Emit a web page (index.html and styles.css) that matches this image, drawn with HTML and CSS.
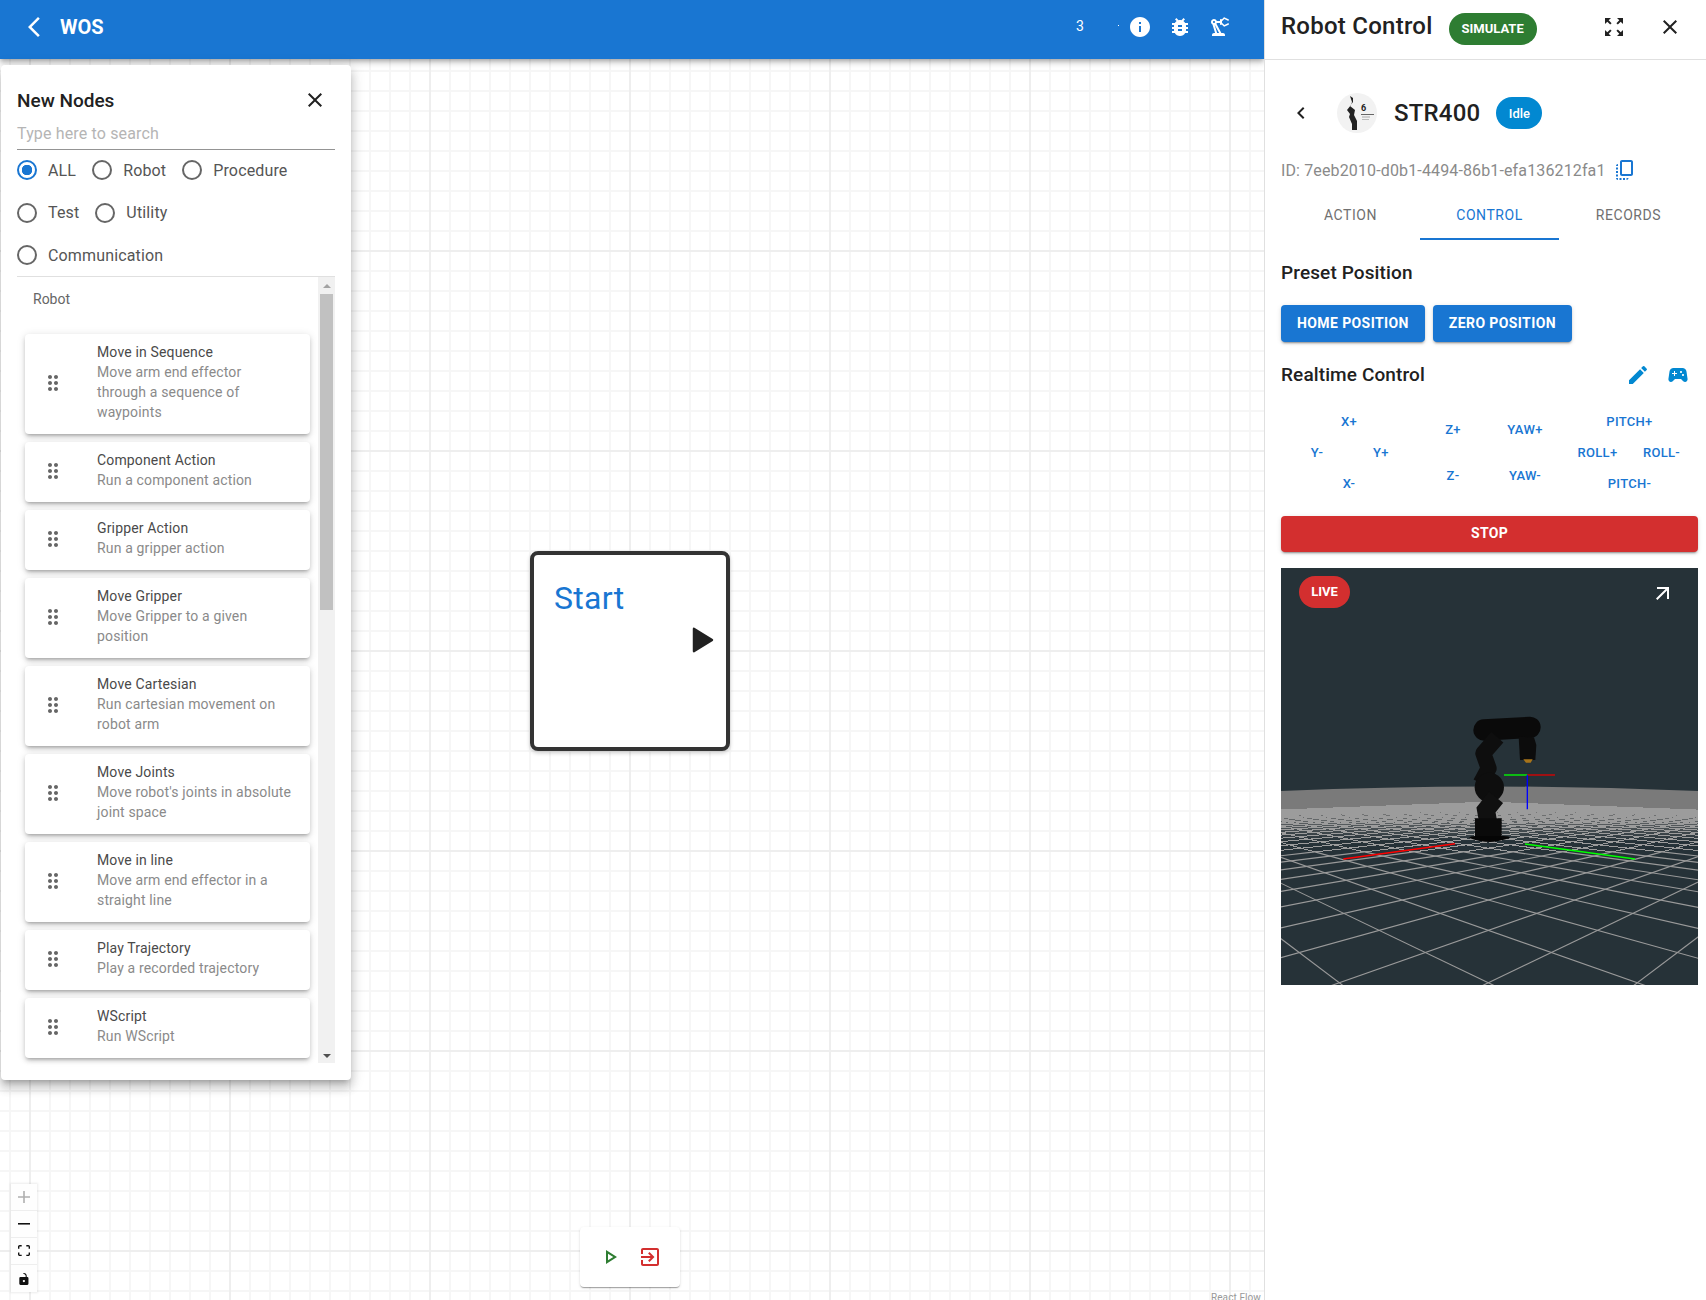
FILE: index.html
```html
<!DOCTYPE html>
<html lang="en">
<head>
<meta charset="utf-8">
<title>WOS</title>
<link rel="stylesheet" href="styles.css">
</head>
<body>
<div class="app">
  <main class="main">
    <header class="topbar">
      <svg class="ico-back" viewBox="0 0 24 24"><path d="M17.77 3.77 16 2 6 12l10 10 1.77-1.77L9.54 12z"/></svg>
      <span class="brand">WOS</span>
      <div class="top-actions">
        <span class="top-count">3</span>
        <span class="top-dot"></span>
        <svg class="ico24" viewBox="0 0 24 24"><path d="M12 2C6.48 2 2 6.48 2 12s4.48 10 10 10 10-4.48 10-10S17.52 2 12 2zm1 15h-2v-6h2v6zm0-8h-2V7h2v2z"/></svg>
        <svg class="ico24" viewBox="0 0 24 24"><path d="M20 8h-2.81c-.45-.78-1.07-1.45-1.82-1.96L17 4.41 15.59 3l-2.17 2.17C12.96 5.06 12.49 5 12 5c-.49 0-.96.06-1.41.17L8.41 3 7 4.41l1.62 1.63C7.88 6.55 7.26 7.22 6.81 8H4v2h2.09c-.05.33-.09.66-.09 1v1H4v2h2v1c0 .34.04.67.09 1H4v2h2.81c1.04 1.79 2.97 3 5.19 3s4.15-1.21 5.19-3H20v-2h-2.09c.05-.33.09-.66.09-1v-1h2v-2h-2v-1c0-.34-.04-.67-.09-1H20V8zm-6 8h-4v-2h4v2zm0-4h-4v-2h4v2z"/></svg>
        <svg class="ico24" viewBox="0 0 24 24"><path d="M19.93 8.35l-3.6 1.68L14 7.7V6.3l2.33-2.33 3.6 1.68c.38.18.82.01 1-.36.18-.38.01-.82-.36-1l-3.92-1.83c-.38-.18-.83-.1-1.13.2L13.78 4.4c-.18-.24-.46-.4-.78-.4-.55 0-1 .45-1 1v1H8.82C8.4 4.84 7.3 4 6 4 4.34 4 3 5.34 3 7c0 1.1.6 2.05 1.48 2.58L7.08 18H6c-1.1 0-2 .9-2 2v1h13v-1c0-1.1-.9-2-2-2h-1.62L8.41 8.77c.17-.24.31-.49.41-.77H12v1c0 .55.45 1 1 1 .32 0 .6-.16.78-.4l1.74 1.74c.3.3.75.38 1.13.2l3.92-1.83c.38-.18.54-.62.36-1-.18-.37-.62-.54-1-.36zM6 8c-.55 0-1-.45-1-1s.45-1 1-1 1 .45 1 1-.45 1-1 1zm5.11 10H9.17l-2.46-8h.1l4.3 8z"/></svg>
      </div>
    </header>
    <div class="canvas"></div>

    <section class="node-start">
      <span class="node-title">Start</span>
      <svg class="node-handle" viewBox="0 0 22 26"><path d="M2.5 2.5 19.5 13 2.5 23.5z"/></svg>
    </section>

    <aside class="palette">
      <div class="pal-head">
        <h2 class="pal-title">New Nodes</h2>
        <svg class="pal-close" viewBox="0 0 24 24"><path d="M19 6.41 17.59 5 12 10.59 6.41 5 5 6.41 10.59 12 5 17.59 6.41 19 12 13.41 17.59 19 19 17.59 13.41 12z"/></svg>
      </div>
      <div class="pal-search">Type here to search</div>
      <div class="radio-row">
        <span class="radio"><i class="ring ring-on"></i>ALL</span>
        <span class="radio"><i class="ring"></i>Robot</span>
        <span class="radio"><i class="ring"></i>Procedure</span>
      </div>
      <div class="radio-row">
        <span class="radio"><i class="ring"></i>Test</span>
        <span class="radio"><i class="ring"></i>Utility</span>
      </div>
      <div class="radio-row">
        <span class="radio"><i class="ring"></i>Communication</span>
      </div>
      <div class="pal-body">
        <div class="pal-list">
          <div class="pal-group">Robot</div>
          <div class="card">
            <svg class="grip" viewBox="0 0 24 24"><path d="M11 18c0 1.1-.9 2-2 2s-2-.9-2-2 .9-2 2-2 2 .9 2 2zm-2-8c-1.1 0-2 .9-2 2s.9 2 2 2 2-.9 2-2-.9-2-2-2zm0-6c-1.1 0-2 .9-2 2s.9 2 2 2 2-.9 2-2-.9-2-2-2zm6 4c1.1 0 2-.9 2-2s-.9-2-2-2-2 .9-2 2 .9 2 2 2zm0 2c-1.1 0-2 .9-2 2s.9 2 2 2 2-.9 2-2-.9-2-2-2zm0 6c-1.1 0-2 .9-2 2s.9 2 2 2 2-.9 2-2-.9-2-2-2z"/></svg>
            <div class="card-text"><div class="card-name">Move in Sequence</div><div class="card-desc">Move arm end effector through a sequence of waypoints</div></div>
          </div>
          <div class="card">
            <svg class="grip" viewBox="0 0 24 24"><path d="M11 18c0 1.1-.9 2-2 2s-2-.9-2-2 .9-2 2-2 2 .9 2 2zm-2-8c-1.1 0-2 .9-2 2s.9 2 2 2 2-.9 2-2-.9-2-2-2zm0-6c-1.1 0-2 .9-2 2s.9 2 2 2 2-.9 2-2-.9-2-2-2zm6 4c1.1 0 2-.9 2-2s-.9-2-2-2-2 .9-2 2 .9 2 2 2zm0 2c-1.1 0-2 .9-2 2s.9 2 2 2 2-.9 2-2-.9-2-2-2zm0 6c-1.1 0-2 .9-2 2s.9 2 2 2 2-.9 2-2-.9-2-2-2z"/></svg>
            <div class="card-text"><div class="card-name">Component Action</div><div class="card-desc">Run a component action</div></div>
          </div>
          <div class="card">
            <svg class="grip" viewBox="0 0 24 24"><path d="M11 18c0 1.1-.9 2-2 2s-2-.9-2-2 .9-2 2-2 2 .9 2 2zm-2-8c-1.1 0-2 .9-2 2s.9 2 2 2 2-.9 2-2-.9-2-2-2zm0-6c-1.1 0-2 .9-2 2s.9 2 2 2 2-.9 2-2-.9-2-2-2zm6 4c1.1 0 2-.9 2-2s-.9-2-2-2-2 .9-2 2 .9 2 2 2zm0 2c-1.1 0-2 .9-2 2s.9 2 2 2 2-.9 2-2-.9-2-2-2zm0 6c-1.1 0-2 .9-2 2s.9 2 2 2 2-.9 2-2-.9-2-2-2z"/></svg>
            <div class="card-text"><div class="card-name">Gripper Action</div><div class="card-desc">Run a gripper action</div></div>
          </div>
          <div class="card">
            <svg class="grip" viewBox="0 0 24 24"><path d="M11 18c0 1.1-.9 2-2 2s-2-.9-2-2 .9-2 2-2 2 .9 2 2zm-2-8c-1.1 0-2 .9-2 2s.9 2 2 2 2-.9 2-2-.9-2-2-2zm0-6c-1.1 0-2 .9-2 2s.9 2 2 2 2-.9 2-2-.9-2-2-2zm6 4c1.1 0 2-.9 2-2s-.9-2-2-2-2 .9-2 2 .9 2 2 2zm0 2c-1.1 0-2 .9-2 2s.9 2 2 2 2-.9 2-2-.9-2-2-2zm0 6c-1.1 0-2 .9-2 2s.9 2 2 2 2-.9 2-2-.9-2-2-2z"/></svg>
            <div class="card-text"><div class="card-name">Move Gripper</div><div class="card-desc">Move Gripper to a given position</div></div>
          </div>
          <div class="card">
            <svg class="grip" viewBox="0 0 24 24"><path d="M11 18c0 1.1-.9 2-2 2s-2-.9-2-2 .9-2 2-2 2 .9 2 2zm-2-8c-1.1 0-2 .9-2 2s.9 2 2 2 2-.9 2-2-.9-2-2-2zm0-6c-1.1 0-2 .9-2 2s.9 2 2 2 2-.9 2-2-.9-2-2-2zm6 4c1.1 0 2-.9 2-2s-.9-2-2-2-2 .9-2 2 .9 2 2 2zm0 2c-1.1 0-2 .9-2 2s.9 2 2 2 2-.9 2-2-.9-2-2-2zm0 6c-1.1 0-2 .9-2 2s.9 2 2 2 2-.9 2-2-.9-2-2-2z"/></svg>
            <div class="card-text"><div class="card-name">Move Cartesian</div><div class="card-desc">Run cartesian movement on robot arm</div></div>
          </div>
          <div class="card">
            <svg class="grip" viewBox="0 0 24 24"><path d="M11 18c0 1.1-.9 2-2 2s-2-.9-2-2 .9-2 2-2 2 .9 2 2zm-2-8c-1.1 0-2 .9-2 2s.9 2 2 2 2-.9 2-2-.9-2-2-2zm0-6c-1.1 0-2 .9-2 2s.9 2 2 2 2-.9 2-2-.9-2-2-2zm6 4c1.1 0 2-.9 2-2s-.9-2-2-2-2 .9-2 2 .9 2 2 2zm0 2c-1.1 0-2 .9-2 2s.9 2 2 2 2-.9 2-2-.9-2-2-2zm0 6c-1.1 0-2 .9-2 2s.9 2 2 2 2-.9 2-2-.9-2-2-2z"/></svg>
            <div class="card-text"><div class="card-name">Move Joints</div><div class="card-desc">Move robot's joints in absolute joint space</div></div>
          </div>
          <div class="card">
            <svg class="grip" viewBox="0 0 24 24"><path d="M11 18c0 1.1-.9 2-2 2s-2-.9-2-2 .9-2 2-2 2 .9 2 2zm-2-8c-1.1 0-2 .9-2 2s.9 2 2 2 2-.9 2-2-.9-2-2-2zm0-6c-1.1 0-2 .9-2 2s.9 2 2 2 2-.9 2-2-.9-2-2-2zm6 4c1.1 0 2-.9 2-2s-.9-2-2-2-2 .9-2 2 .9 2 2 2zm0 2c-1.1 0-2 .9-2 2s.9 2 2 2 2-.9 2-2-.9-2-2-2zm0 6c-1.1 0-2 .9-2 2s.9 2 2 2 2-.9 2-2-.9-2-2-2z"/></svg>
            <div class="card-text"><div class="card-name">Move in line</div><div class="card-desc">Move arm end effector in a straight line</div></div>
          </div>
          <div class="card">
            <svg class="grip" viewBox="0 0 24 24"><path d="M11 18c0 1.1-.9 2-2 2s-2-.9-2-2 .9-2 2-2 2 .9 2 2zm-2-8c-1.1 0-2 .9-2 2s.9 2 2 2 2-.9 2-2-.9-2-2-2zm0-6c-1.1 0-2 .9-2 2s.9 2 2 2 2-.9 2-2-.9-2-2-2zm6 4c1.1 0 2-.9 2-2s-.9-2-2-2-2 .9-2 2 .9 2 2 2zm0 2c-1.1 0-2 .9-2 2s.9 2 2 2 2-.9 2-2-.9-2-2-2zm0 6c-1.1 0-2 .9-2 2s.9 2 2 2 2-.9 2-2-.9-2-2-2z"/></svg>
            <div class="card-text"><div class="card-name">Play Trajectory</div><div class="card-desc">Play a recorded trajectory</div></div>
          </div>
          <div class="card">
            <svg class="grip" viewBox="0 0 24 24"><path d="M11 18c0 1.1-.9 2-2 2s-2-.9-2-2 .9-2 2-2 2 .9 2 2zm-2-8c-1.1 0-2 .9-2 2s.9 2 2 2 2-.9 2-2-.9-2-2-2zm0-6c-1.1 0-2 .9-2 2s.9 2 2 2 2-.9 2-2-.9-2-2-2zm6 4c1.1 0 2-.9 2-2s-.9-2-2-2-2 .9-2 2 .9 2 2 2zm0 2c-1.1 0-2 .9-2 2s.9 2 2 2 2-.9 2-2-.9-2-2-2zm0 6c-1.1 0-2 .9-2 2s.9 2 2 2 2-.9 2-2-.9-2-2-2z"/></svg>
            <div class="card-text"><div class="card-name">WScript</div><div class="card-desc">Run WScript</div></div>
          </div>
        </div>
        <div class="fake-scroll">
          <i class="arrow-up"></i>
          <i class="thumb"></i>
          <i class="arrow-down"></i>
        </div>
      </div>
    </aside>

    <nav class="flow-controls">
      <span class="fc-btn"><svg class="fc-plus" viewBox="0 0 32 32"><path d="M32 18.133H18.133V32h-4.266V18.133H0v-4.266h13.867V0h4.266v13.867H32z"/></svg></span>
      <span class="fc-btn"><svg class="fc-minus" viewBox="0 0 32 5"><path d="M0 0h32v4.2H0z"/></svg></span>
      <span class="fc-btn"><svg class="fc-fit" viewBox="0 0 32 30"><path d="M3.692 4.63c0-.53.4-.938.939-.938h5.215V0H4.708C2.13 0 0 2.054 0 4.63v5.216h3.692V4.631zM27.354 0h-5.2v3.692h5.17c.53 0 .984.4.984.939v5.215H32V4.631A4.624 4.624 0 0027.354 0zm.954 24.83c0 .532-.4.94-.939.94h-5.215v3.768h5.215c2.577 0 4.631-2.13 4.631-4.707v-5.139h-3.692v5.139zm-23.677.94c-.531 0-.939-.4-.939-.94v-5.138H0v5.139c0 2.577 2.13 4.707 4.708 4.707h5.138V25.77H4.631z"/></svg></span>
      <span class="fc-btn fc-last"><svg class="fc-lock" viewBox="0 0 25 32"><path d="M21.333 10.667H19.81V7.619C19.81 3.429 16.38 0 12.19 0c-4.114 0-1.37 2.133.305 2.438 1.676.305 4.42 2.59 4.42 5.181v3.048H3.047A3.056 3.056 0 000 13.714v15.238A3.056 3.056 0 003.048 32h18.285a3.056 3.056 0 003.048-3.048V13.714a3.056 3.056 0 00-3.048-3.047zM12.19 24.533a3.056 3.056 0 01-3.047-3.047 3.056 3.056 0 013.047-3.048 3.056 3.056 0 013.048 3.048 3.056 3.056 0 01-3.048 3.047z"/></svg></span>
    </nav>

    <div class="run-bar">
      <svg class="ico-green" viewBox="0 0 24 24"><path d="M10 8.64 15.27 12 10 15.36V8.64M8 5v14l11-7L8 5z"/></svg>
      <svg class="ico-red" viewBox="0 0 24 24"><path d="M10.09 15.59 11.5 17l5-5-5-5-1.41 1.41L12.67 11H3v2h9.67l-2.58 2.59zM19 3H5c-1.11 0-2 .9-2 2v4h2V5h14v14H5v-4H3v4c0 1.1.89 2 2 2h14c1.1 0 2-.9 2-2V5c0-1.1-.9-2-2-2z"/></svg>
    </div>
    <span class="attribution">React Flow</span>
  </main>

  <aside class="side">
    <header class="side-head">
      <h1 class="side-title">Robot Control</h1>
      <span class="chip chip-sim">SIMULATE</span>
      <svg class="ico24 dark head-expand" viewBox="0 0 24 24"><path d="m15 3 2.3 2.3-2.89 2.87 1.42 1.42L18.7 6.7 21 9V3h-6zM3 9l2.3-2.3 2.87 2.89 1.42-1.42L6.7 5.3 9 3H3v6zm6 12-2.3-2.3 2.89-2.87-1.42-1.42L5.3 17.3 3 15v6h6zm12-6-2.3 2.3-2.87-2.89-1.42 1.42 2.89 2.87L15 21h6v-6z"/></svg>
      <svg class="ico24 dark head-close" viewBox="0 0 24 24"><path d="M19 6.41 17.59 5 12 10.59 6.41 5 5 6.41 10.59 12 5 17.59 6.41 19 12 13.41 17.59 19 19 17.59 13.41 12z"/></svg>
    </header>
    <div class="side-body">
      <div class="robot-row">
        <svg class="ico24 dark robot-back" viewBox="0 0 24 24"><path d="M15.41 7.41 14 6l-6 6 6 6 1.41-1.41L10.83 12z"/></svg>
        <svg class="avatar" viewBox="0 0 40 40">
          <circle cx="20" cy="20" r="20" fill="#f2f2f2"/>
          <path d="M13 3l3 2 0 4-3 4 5 4-1 5 2 4 1 2v9h-5v-6l-3-7 1-3-3-4 4-5 1-3z" fill="#222"/>
          <text x="24" y="18" class="avatar-six">6</text>
          <rect x="24" y="21" width="13" height="1" fill="#666"/>
          <rect x="25" y="23.5" width="8" height="1" fill="#aaa"/>
          <rect x="25" y="26" width="7" height="1" fill="#bbb"/>
        </svg>
        <span class="robot-name">STR400</span>
        <span class="chip chip-idle">Idle</span>
      </div>
      <div class="id-row">
        <span>ID: 7eeb2010-d0b1-4494-86b1-efa136212fa1</span>
        <svg class="copy" viewBox="0 0 24 24"><path d="M18 2H9c-1.1 0-2 .9-2 2v12c0 1.1.9 2 2 2h9c1.1 0 2-.9 2-2V4c0-1.1-.9-2-2-2zm0 14H9V4h9v12zM3 15v-2h2v2H3zm0-5.5h2v2H3v-2zM10 20h2v2h-2v-2zm-7-1.5v-2h2v2H3zM5 22c-1.1 0-2-.9-2-2h2v2zm3.5 0h-2v-2h2v2zm5 0v-2h2c0 1.1-.9 2-2 2zM5 6v2H3c0-1.1.9-2 2-2z"/></svg>
      </div>
      <div class="tabs">
        <span class="tab">ACTION</span>
        <span class="tab tab-on">CONTROL</span>
        <span class="tab">RECORDS</span>
      </div>
      <h3 class="sect sect-preset">Preset Position</h3>
      <div class="btn-row">
        <span class="btn">HOME POSITION</span>
        <span class="btn">ZERO POSITION</span>
      </div>
      <div class="rt-head">
        <h3 class="sect">Realtime Control</h3>
        <svg class="ico24 teal rt-edit" viewBox="0 0 24 24"><path d="M3 17.25V21h3.75L17.81 9.94l-3.75-3.75L3 17.25zM20.71 7.04c.39-.39.39-1.02 0-1.41l-2.34-2.34a.9959.9959 0 0 0-1.41 0l-1.83 1.83 3.75 3.75 1.83-1.83z"/></svg>
        <svg class="ico24 teal" viewBox="0 0 24 24"><path d="M21.58 16.09l-1.09-7.66C20.21 6.46 18.52 5 16.53 5H7.47C5.48 5 3.79 6.46 3.51 8.43l-1.09 7.66C2.2 17.63 3.39 19 4.94 19c.68 0 1.32-.27 1.8-.75L9 16h6l2.25 2.25c.48.48 1.13.75 1.8.75 1.56 0 2.75-1.37 2.53-2.91zM11 11H9v2H8v-2H6v-1h2V8h1v2h2v1zm4-1c-.55 0-1-.45-1-1s.45-1 1-1 1 .45 1 1-.45 1-1 1zm2 3c-.55 0-1-.45-1-1s.45-1 1-1 1 .45 1 1-.45 1-1 1z"/></svg>
      </div>
      <div class="jog">
        <div class="pad pad-xy">
          <span class="c2">X+</span>
          <span class="c1">Y-</span><span class="c3">Y+</span>
          <span class="c2">X-</span>
        </div>
        <div class="jog-col"><span>Z+</span><span>Z-</span></div>
        <div class="jog-col"><span>YAW+</span><span>YAW-</span></div>
        <div class="pad pad-rp">
          <span class="c2">PITCH+</span>
          <span class="c1">ROLL+</span><span class="c3">ROLL-</span>
          <span class="c2">PITCH-</span>
        </div>
      </div>
      <div class="stop">STOP</div>
      <div class="view3d">
        <svg class="scene" viewBox="0 0 417 417">
          <defs>
            <linearGradient id="fade" x1="0" y1="0" x2="0" y2="1">
              <stop offset="0" stop-color="#7a7a7a"/>
              <stop offset="1" stop-color="#7a7a7a" stop-opacity="0"/>
            </linearGradient>
          </defs>
          <path d="M0 223Q208 214 417 223V243H0z" fill="#7a7a7a"/>
          <rect x="0" y="243" width="417" height="30" fill="url(#fade)"/>
          <g id="grid-far" class="grid-far"></g>
          <g id="grid-near" class="grid-near"></g>
          <path d="M62.3 291 174 275.7" stroke="#f00" stroke-width="1.5"/>
          <path d="M244 276 354 291" stroke="#0f0" stroke-width="1.5"/>
          <g transform="translate(179 132) scale(.3333)">
            <path d="M72 90 210 82" stroke="#0a0a0a" stroke-width="64" stroke-linecap="round"/>
            <path d="M176 110 222 112 229 135 226 180 180 180z" fill="#0c0c0c"/>
            <path d="M190 178h28l-6 10h-14z" fill="#a8741a"/>
            <path d="M112 112 70 160 86 205 62 250" stroke="#0e0e0e" stroke-width="48" fill="none" stroke-linejoin="round"/>
            <circle cx="88" cy="262" r="44" fill="#0e0e0e"/>
            <path d="M108 292 78 330 85 370" stroke="#101010" stroke-width="54" fill="none"/>
            <path d="M45 355H125V414H45z" fill="#0a0a0a"/>
            <path d="M28 414Q28 408 50 408H130Q150 408 150 414Q110 426 90 426Q60 426 28 414z" fill="#050505"/>
            <path d="M132 225H202" stroke="#0f0" stroke-width="4"/>
            <path d="M202 225H285" stroke="#d00" stroke-width="4"/>
            <path d="M202 225V328" stroke="#00f" stroke-width="4"/>
          </g>
        </svg>
        <span class="chip chip-live">LIVE</span>
        <svg class="open-ext" viewBox="0 0 24 24"><path d="M6 6v2h8.59L5 17.59 6.41 19 16 9.41V18h2V6z"/></svg>
      </div>
    </div>
  </aside>
</div>
<script src="script.js"></script>
</body>
</html>
```
FILE: styles.css
```css
* { box-sizing: border-box; }
html, body { margin: 0; padding: 0; }
body { font-family: Roboto, "Noto Sans", sans-serif; color: #212121; background: #fff; }
h1, h2, h3 { margin: 0; }
.app { display: flex; width: 1706px; height: 1300px; overflow: hidden; }
.main { position: relative; width: 1264px; display: flex; flex-direction: column; overflow: hidden; }

.topbar { position: relative; z-index: 2; flex: none; height: 59px; background: #1976d2; color: #fff; display: flex; align-items: center; padding: 0 32px 5px 22px; box-shadow: 0 2px 4px -1px rgba(0,0,0,.2), 0 4px 5px rgba(0,0,0,.14), 0 1px 10px rgba(0,0,0,.12); }
.ico-back { width: 24px; height: 24px; fill: #fff; }
.brand { margin-left: 14px; font-size: 20px; font-weight: 700; }
.top-actions { margin-left: auto; display: flex; align-items: center; gap: 16px; }
.top-count { font-size: 14px; margin-right: 18px; width: 8px; margin-top: -2px; }
.top-dot { width: 1px; height: 1px; background: #fff; margin: -4px -7px 0 0; }
.ico24 { width: 24px; height: 24px; fill: #fff; flex: none; }
.ico24.dark { fill: #212121; }
.ico24.teal { fill: #0288d1; }

.canvas { flex: 1; background-color: #fff;
  background-image:
    linear-gradient(to bottom, #eeeeee 2px, transparent 2px),
    linear-gradient(to right, #eeeeee 2px, transparent 2px),
    linear-gradient(to bottom, #f6f6f6 2px, transparent 2px),
    linear-gradient(to right, #f6f6f6 2px, transparent 2px);
  background-size: 200px 200px, 200px 200px, 20px 20px, 20px 20px;
  background-position: 0 191px, 29px 0, 0 11px, 9px 0;
}

.node-start { position: absolute; left: 530px; top: 551px; width: 200px; height: 200px; background: #fff; border: 4px solid #333; border-radius: 8px; box-shadow: 0 2px 4px rgba(0,0,0,.2); }
.node-title { position: absolute; left: 20px; top: 24px; font-size: 32px; line-height: 38px; letter-spacing: .3px; color: #1976d2; }
.node-handle { position: absolute; left: 157px; top: 71px; width: 24px; height: 28px; fill: #212121; stroke: #212121; stroke-width: 2; stroke-linejoin: round; }

.palette { position: absolute; z-index: 3; left: 1px; top: 65px; width: 350px; height: 1015px; background: #fff; border-radius: 4px; padding: 19px 16px 0; box-shadow: 0 5px 5px -3px rgba(0,0,0,.2), 0 8px 10px 1px rgba(0,0,0,.14), 0 3px 14px 2px rgba(0,0,0,.12); }
.pal-head { display: flex; align-items: center; justify-content: space-between; height: 32px; padding-right: 8px; }
.pal-title { font-size: 19px; font-weight: 500; }
.pal-close { width: 24px; height: 24px; fill: #212121; }
.pal-search { height: 34px; margin-bottom: -1px; padding-top: 6px; line-height: 24px; font-size: 16px; letter-spacing: .15px; color: #b5b5b5; border-bottom: 1px solid #949494; }
.radio-row { display: flex; align-items: center; gap: 16px; height: 42.5px; font-size: 16px; letter-spacing: .15px; color: #555; }
.radio { display: flex; align-items: center; gap: 11px; }
.ring { width: 20px; height: 20px; border: 2px solid #666; border-radius: 50%; display: block; flex: none; }
.ring-on { border-color: #1976d2; background: radial-gradient(circle, #1976d2 0 5px, transparent 5.5px); }
.pal-body { display: flex; height: 787px; margin-top: -1px; border-top: 1px solid #e0e0e0; }
.pal-list { width: 301px; padding: 12px 0 0 8px; }
.pal-group { font-size: 14px; line-height: 20px; color: #666; margin: 0 0 25px 8px; }
.card { display: flex; align-items: center; width: 285px; margin-bottom: 8px; padding: 8px 0 12px 16px; background: #fff; border-radius: 4px; box-shadow: 0 3px 3px -2px rgba(0,0,0,.2), 0 3px 4px rgba(0,0,0,.14), 0 1px 8px rgba(0,0,0,.12); }
.grip { width: 24px; height: 24px; margin-top: 2px; fill: #666; flex: none; }
.card-text { margin-left: 32px; width: 197px; font-size: 14px; line-height: 20px; letter-spacing: .15px; }
.card-name { color: #4a4a4a; }
.card-desc { color: #8a8a8a; }
.fake-scroll { width: 17px; height: 786px; background: #f1f1f1; display: flex; flex-direction: column; align-items: center; }
.arrow-up { margin-top: 7px; width: 0; height: 0; border: 4px solid transparent; border-top: 0; border-bottom: 4px solid #a3a3a3; }
.thumb { margin-top: 6px; width: 13px; height: 316px; background: #c1c1c1; }
.arrow-down { margin-top: auto; margin-bottom: 5px; width: 0; height: 0; border: 4px solid transparent; border-bottom: 0; border-top: 4px solid #505050; }

.flow-controls { position: absolute; left: 11px; top: 1184px; width: 26px; display: flex; flex-direction: column; box-shadow: 0 0 2px 1px rgba(0,0,0,.08); }
.fc-btn { height: 27px; background: #fefefe; border-bottom: 1px solid #eee; display: flex; align-items: center; justify-content: center; }
.fc-last { border-bottom: 0; }
.fc-btn svg { width: 12px; max-height: 12px; }
.fc-plus { fill: #b0b0b0; }
.fc-minus, .fc-fit, .fc-lock { fill: #111; }
.fc-btn .fc-lock { width: 10px; }

.run-bar { position: absolute; left: 580px; top: 1227px; width: 100px; height: 60px; display: flex; align-items: center; justify-content: center; gap: 16px; background: #fff; border-radius: 4px; box-shadow: 0 2px 1px -1px rgba(0,0,0,.2), 0 1px 1px rgba(0,0,0,.14), 0 1px 3px rgba(0,0,0,.12); }
.ico-green { width: 24px; height: 24px; fill: #2e7d32; }
.ico-red { width: 24px; height: 24px; fill: #d32f2f; }
.attribution { position: absolute; right: 3px; bottom: -4px; font-size: 10px; line-height: 12px; letter-spacing: .1px; color: #999; }

.side { width: 442px; border-left: 1px solid #e0e0e0; }
.side-head { height: 60px; border-bottom: 1px solid #e0e0e0; display: flex; align-items: center; padding: 0 24px 0 16px; }
.side-title { font-size: 24px; font-weight: 500; letter-spacing: .25px; margin-top: -7px; }
.chip { display: inline-flex; align-items: center; justify-content: center; height: 32px; padding-bottom: 2px; border-radius: 16px; color: #fff; font-size: 13px; }
.chip-sim { margin-left: 16px; width: 88px; background: #2e7d32; font-weight: 700; margin-top: -1px; }
.head-expand { margin-left: auto; margin-top: -5px; }
.head-close { margin-left: 32px; margin-top: -5px; }
.side-body { padding: 33px 8px 0 16px; }
.robot-row { display: flex; align-items: center; height: 40px; }
.robot-back { margin-left: 8px; }
.avatar { width: 40px; height: 40px; margin-left: 24px; flex: none; }
.avatar-six { font-size: 9px; font-weight: 700; fill: #222; font-family: Roboto, sans-serif; }
.robot-name { margin-left: 17px; font-size: 24px; font-weight: 500; letter-spacing: .2px; }
.chip-idle { margin-left: 16px; width: 46px; background: #0288d1; font-weight: 500; padding-bottom: 0; }
.id-row { display: flex; align-items: center; margin-top: 25px; height: 24px; font-size: 16px; letter-spacing: .135px; color: #8a8a8a; }
.copy { width: 24px; height: 24px; margin-left: 7px; fill: #1976d2; }
.tabs { display: flex; margin-top: 10px; height: 48px; }
.tab { flex: 1; display: flex; align-items: center; justify-content: center; padding-bottom: 2px; font-size: 14px; font-weight: 400; letter-spacing: .55px; color: #707070; }
.tab-on { color: #1976d2; border-bottom: 2px solid #1976d2; padding-bottom: 0; }
.sect { font-size: 19px; font-weight: 500; line-height: 24px; letter-spacing: .12px; }
.sect-preset { margin-top: 21px; }
.btn-row { display: flex; gap: 8px; margin-top: 20px; }
.btn { height: 37px; padding: 0 16px 2px; display: flex; align-items: center; background: #1976d2; color: #fff; font-size: 14px; font-weight: 700; letter-spacing: .4px; border-radius: 4px; box-shadow: 0 3px 1px -2px rgba(0,0,0,.2), 0 2px 2px rgba(0,0,0,.14), 0 1px 5px rgba(0,0,0,.12); }
.rt-head { display: flex; align-items: center; height: 24px; margin-top: 21px; padding-right: 8px; }
.rt-edit { margin-left: auto; margin-right: 16px; }
.jog { display: grid; grid-template-columns: 136px 72px 72px 137px; margin-top: 19px; height: 93px; font-size: 13px; font-weight: 500; letter-spacing: .3px; color: #1976d2; text-align: center; }
.pad { display: grid; grid-template-rows: repeat(3, 31px); align-items: center; }
.pad-xy { grid-template-columns: repeat(3, 32px); justify-content: center; }
.pad-rp { grid-template-columns: repeat(3, 32px); justify-content: center; }
.pad .c1 { grid-column: 1; justify-self: center; white-space: nowrap; }
.pad .c2 { grid-column: 1 / 4; }
.pad .c3 { grid-column: 3; justify-self: center; white-space: nowrap; }
.jog-col { display: flex; flex-direction: column; justify-content: center; gap: 24px; line-height: 22px; }
.stop { margin-top: 17px; height: 36px; padding-bottom: 2px; display: flex; align-items: center; justify-content: center; background: #d32f2f; color: #fff; font-size: 14px; font-weight: 700; letter-spacing: .3px; border-radius: 4px; box-shadow: 0 3px 1px -2px rgba(0,0,0,.2), 0 2px 2px rgba(0,0,0,.14), 0 1px 5px rgba(0,0,0,.12); }
.view3d { position: relative; margin-top: 16px; width: 417px; height: 417px; background: #263238; overflow: hidden; }
.scene { display: block; width: 417px; height: 417px; }
.grid-far { stroke: #9c9c9c; stroke-width: 1; shape-rendering: crispEdges; }
.grid-near { stroke: #9a9a9a; stroke-width: 1.1; }
.chip-live { position: absolute; left: 18px; top: 8px; width: 51px; background: #d32f2f; font-weight: 700; }
.open-ext { position: absolute; left: 370px; top: 13px; width: 24px; height: 24px; fill: #fff; }
```
FILE: script.js
```js
// Perspective ground grid of the 3D view: a 50x50 floor seen across its diagonal.
(function () {
  var far = document.getElementById('grid-far');
  var near = document.getElementById('grid-near');
  var NS = 'http://www.w3.org/2000/svg';
  var N = 25, MAX_SUM = 17, SPLIT = 3;
  function project(i, j) {
    var h = 1 / (0.00604 - 0.00031 * (i + j));
    return [(625 + 0.38 * (i - j) * h - 3) / 3, (680 + h - 24) / 3];
  }
  function line(group, a, b) {
    var p = project(a[0], a[1]), q = project(b[0], b[1]);
    var l = document.createElementNS(NS, 'line');
    l.setAttribute('x1', p[0].toFixed(2));
    l.setAttribute('y1', p[1].toFixed(2));
    l.setAttribute('x2', q[0].toFixed(2));
    l.setAttribute('y2', q[1].toFixed(2));
    group.appendChild(l);
  }
  function segments(k, flip) {
    var end = Math.min(N, MAX_SUM - k);
    if (end <= -N) return;
    var mid = Math.min(end, Math.max(-N, SPLIT - k));
    function pt(t) { return flip ? [t, k] : [k, t]; }
    if (mid > -N) line(far, pt(-N), pt(mid));
    if (end > mid) line(near, pt(mid), pt(end));
  }
  for (var k = -N; k <= N; k++) {
    segments(k, false);
    segments(k, true);
  }
})();
```
